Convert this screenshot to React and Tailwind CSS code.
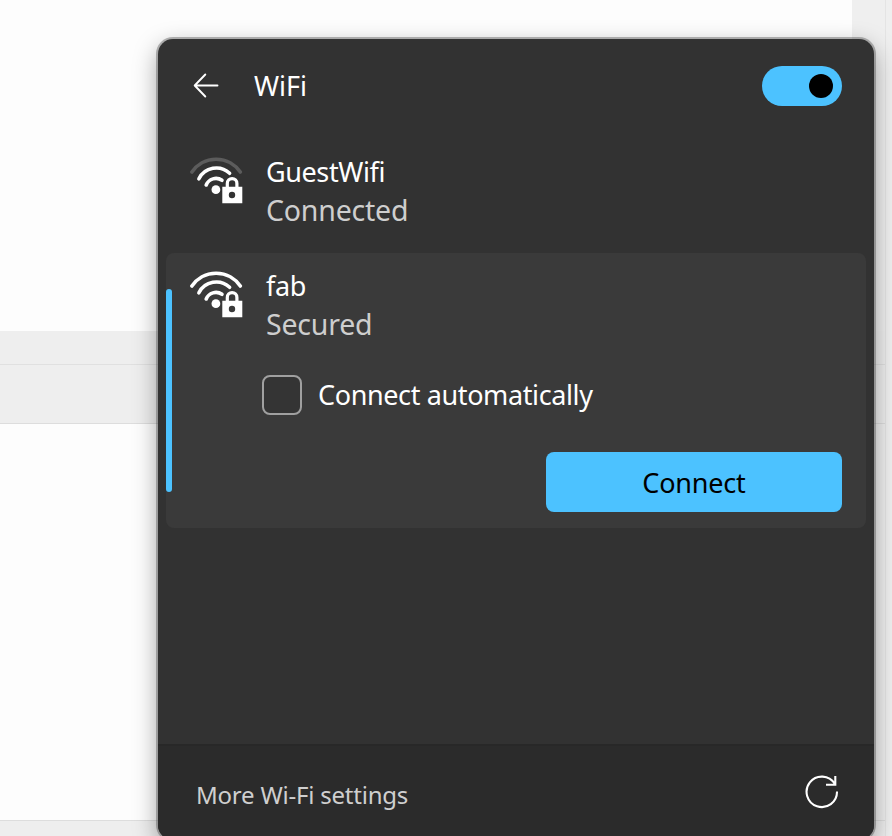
function Backdrop() {
  return (
    <div className="flex h-full w-full bg-[#efefef]">
      <div className="flex w-[886px] flex-col border-r border-[#e4e4e4]">
        <div className="h-[331px] w-[852px] bg-[#fdfdfd]" />
        <div className="h-[34px] border-b border-[#e0e0e0] bg-[#eeeeee]" />
        <div className="h-[59px] border-b border-[#dddddd] bg-[#eeeeee]" />
        <div className="h-[396px] w-[852px] bg-[#fdfdfd]" />
        <div className="flex-1 border-t border-[#dddddd] bg-[#eeeeee]" />
      </div>
    </div>
  );
}

function BackArrow() {
  return (
    <svg width="26" height="26" viewBox="0 0 26 26" fill="none" stroke="#fff" strokeWidth="1.9" strokeLinecap="round" strokeLinejoin="round">
      <path d="M24.500 12.500H2M12.300 1.500L1.700 12.500L12.300 23.500" />
    </svg>
  );
}

function WifiLock({ outer }) {
  return (
    <svg width="54" height="48" viewBox="0 0 54 48" fill="none" strokeLinecap="round">
      <g stroke="#fff" strokeWidth="3.6">
        <path d="M1.900 16A29.300 29.300 0 0 1 50.300 16" stroke={outer} />
        <path d="M8.900 22.800A19.400 19.400 0 0 1 39.600 17.300" />
        <path d="M16.200 29A10.600 10.600 0 0 1 32 24.300" />
      </g>
      <circle cx="25.900" cy="33.700" r="4.400" fill="#fff" />
      <path d="M37.300 31V27.400A4.800 4.800 0 0 1 46.900 27.400V31" stroke="#fff" strokeWidth="3.2" />
      <path fill="#fff" fillRule="evenodd" d="M32.300 30.700H52.300V47.200H32.300ZM42 35.800A3.200 3.200 0 1 0 42 42.200A3.200 3.200 0 1 0 42 35.800Z" />
    </svg>
  );
}

function Network({ name, status, outer }) {
  return (
    <div className="flex h-[76px] pl-6">
      <WifiLock outer={outer} />
      <div className="-mt-px ml-[22px] flex flex-col whitespace-nowrap">
        <span className="h-[38px] text-[27px] leading-[34px] tracking-[-0.4px] text-white">{name}</span>
        <span className="h-[38px] text-[28.5px] leading-[34px] tracking-[-0.2px] text-[#cecece]">{status}</span>
      </div>
    </div>
  );
}

function Refresh() {
  return (
    <svg width="34" height="34" viewBox="0 0 34 34" fill="none" stroke="#fff" strokeWidth="2.1">
      <path d="M32 16.500A15.200 15.200 0 1 1 29.700 8.800M30.300 1V9.700H21" />
    </svg>
  );
}

export default function App() {
  return (
    <div className="relative h-[836px] w-[892px] overflow-hidden font-['Noto_Sans','Open_Sans',sans-serif]">
      <Backdrop />
      <section className="absolute top-[39px] left-[158px] flex h-[801px] w-[716px] flex-col overflow-hidden rounded-[15px] bg-[#323232] shadow-[0_0_0_2px_rgba(70,70,70,0.38),0_8px_24px_rgba(0,0,0,0.38)]">
        <header className="flex h-[94px] shrink-0 items-center pr-8 pl-[35px]">
          <BackArrow />
          <h1 className="ml-[35px] text-[27px] leading-[34px] text-white">WiFi</h1>
          <div className="ml-auto flex h-10 w-20 items-center justify-end rounded-full bg-[#4cc2ff] pr-[9px]">
            <div className="size-6 rounded-full bg-black" />
          </div>
        </header>
        <main className="flex flex-col px-2 pt-[23px]">
          <Network name="GuestWifi" status="Connected" outer="#5c5c5c" />
          <div className="mt-[21px] flex h-[275px] rounded-lg bg-[#3a3a3a]">
            <div className="mt-9 h-[203px] w-1.5 shrink-0 rounded-full bg-[#4cc2ff]" />
            <div className="-ml-1.5 flex flex-1 flex-col pt-[17px]">
              <Network name="fab" status="Secured" outer="#fff" />
              <label className="mt-[29px] ml-24 flex h-10 items-center text-[27px] tracking-[-0.38px] text-white">
                <span className="mr-4 size-10 rounded-lg border-2 border-[#a0a0a0] bg-[#343434]" />
                <span className="leading-[34px]">Connect automatically</span>
              </label>
              <button className="mt-[37px] mr-6 h-[60px] w-[296px] self-end rounded-lg bg-[#4cc2ff] pt-0.5 text-[27px] leading-[34px] tracking-[-0.2px] text-black">Connect</button>
            </div>
          </div>
        </main>
        <footer className="mt-auto flex h-24 shrink-0 items-center justify-between border-t-2 border-[#282828] bg-[#2b2b2b] pr-[35px] pl-[38px]">
          <span className="mt-1 text-[24px] tracking-[-0.22px] text-[#cfcfcf]">More Wi-Fi settings</span>
          <span className="mb-0.5">
            <Refresh />
          </span>
        </footer>
      </section>
    </div>
  );
}
